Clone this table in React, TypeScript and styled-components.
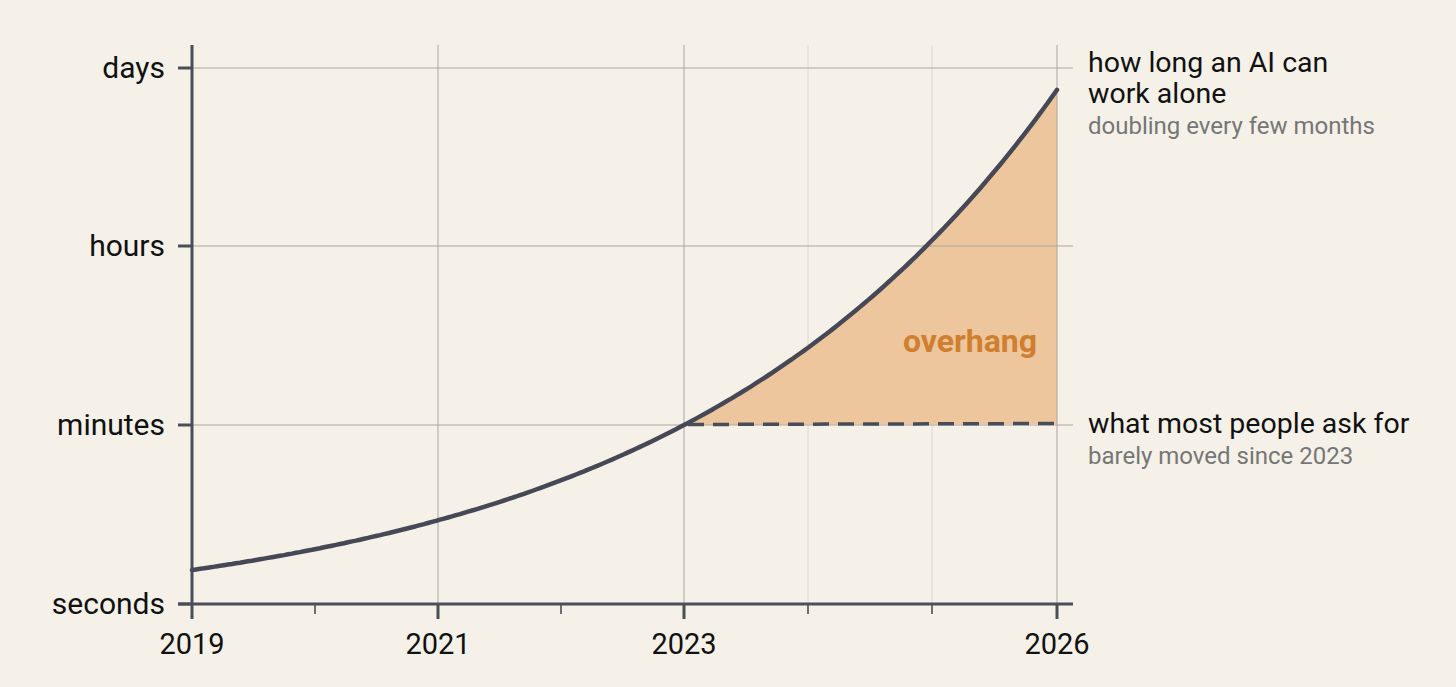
import styled, { createGlobalStyle } from "styled-components";

const GlobalStyle = createGlobalStyle`
  html, body {
    margin: 0;
    padding: 0;
    background: #f5f1e8;
  }
  body {
    overflow: hidden;
    font-family: Roboto, "Liberation Sans", Arial, sans-serif;
  }
`;

// chart frame, in page pixels
const LEFT = 192;
const BOTTOM = 604;
const TOP = 45;
const RIGHT = 1073;

const levels = [
  { label: "days", y: 68 },
  { label: "hours", y: 246 },
  { label: "minutes", y: 425 },
  { label: "seconds", y: 604 },
];

const years = [
  { label: "2019", x: 192 },
  { label: "2021", x: 438 },
  { label: "2023", x: 684 },
  { label: "2026", x: 1057 },
];

const minorTicks = [315, 561, 808, 932];
const minorGrid = [808, 932];

// curve: grows faster than the log scale, fitted by eye
const K = Math.log(1.917) / 246;
const curveY = (x: number) => BOTTOM - (54.2 * Math.exp(K * (x - LEFT)) - 20.2);

function pointsBetween(from: number, to: number, step = 4): [number, number][] {
  const pts: [number, number][] = [];
  for (let x = from; x < to; x += step) pts.push([x, curveY(x)]);
  pts.push([to, curveY(to)]);
  return pts;
}

const toPath = (pts: [number, number][]) =>
  pts.map(([x, y], i) => `${i === 0 ? "M" : "L"}${x.toFixed(1)} ${y.toFixed(1)}`).join(" ");

export default function App(): JSX.Element {
  const curve = toPath(pointsBetween(LEFT, 1057));
  const gap = pointsBetween(684, 1057);
  const fill = `${toPath(gap)} L1057 424 L684 425 Z`;

  return (
    <Page>
      <GlobalStyle />
      <Chart viewBox="0 0 1456 687" width={1456} height={687}>
        {minorGrid.map((x) => (
          <GridLine key={x} $minor x1={x} x2={x} y1={TOP} y2={BOTTOM} />
        ))}
        <Overhang d={fill} />
        {years.slice(1).map((y) => (
          <GridLine key={y.label} x1={y.x} x2={y.x} y1={TOP} y2={BOTTOM} />
        ))}
        {levels.slice(0, 3).map((l) => (
          <GridLine key={l.label} x1={LEFT} x2={RIGHT} y1={l.y} y2={l.y} />
        ))}

        <Curve d={curve} />
        <Ask x1={688} y1={424.5} x2={1057} y2={423.5} />
        <OverhangLabel x={970} y={352}>
          overhang
        </OverhangLabel>

        <Axis x1={LEFT} x2={LEFT} y1={TOP} y2={BOTTOM} />
        <Axis x1={178} x2={RIGHT} y1={BOTTOM} y2={BOTTOM} />
        {levels.map((l) => (
          <Axis key={l.label} x1={178} x2={LEFT} y1={l.y} y2={l.y} />
        ))}
        {years.map((y) => (
          <Axis key={y.label} x1={y.x} x2={y.x} y1={BOTTOM} y2={619} />
        ))}
        {minorTicks.map((x) => (
          <MinorTick key={x} x1={x} x2={x} y1={BOTTOM} y2={614} />
        ))}

        {levels.map((l) => (
          <LevelLabel key={l.label} x={165} y={l.y + 10}>
            {l.label}
          </LevelLabel>
        ))}
        {years.map((y) => (
          <YearLabel key={y.label} x={y.x} y={654}>
            {y.label}
          </YearLabel>
        ))}

        <NoteTitle x={1088} y={72}>how long an AI can</NoteTitle>
        <NoteTitle x={1088} y={103}>work alone</NoteTitle>
        <NoteSub x={1088} y={134}>doubling every few months</NoteSub>

        <NoteTitle x={1088} y={433}>what most people ask for</NoteTitle>
        <NoteSub x={1088} y={464}>barely moved since 2023</NoteSub>
      </Chart>
    </Page>
  );
}

const Page = styled.div`
  display: flex;
  width: 1456px;
  height: 687px;
  background: #f5f1e8;
`;

const Chart = styled.svg`
  display: block;
  flex: none;
`;

const GridLine = styled.line<{ $minor?: boolean }>`
  stroke: ${(p) => (p.$minor ? "#dedad0" : "#a9a7a1")};
  stroke-width: 1;
`;

const Axis = styled.line`
  stroke: #4b4e57;
  stroke-width: 3;
`;

const MinorTick = styled.line`
  stroke: #4b4e57;
  stroke-width: 1.6;
`;

const Curve = styled.path`
  fill: none;
  stroke: #464955;
  stroke-width: 4.5;
  stroke-linecap: round;
  stroke-linejoin: round;
`;

const Overhang = styled.path`
  fill: #edc69d;
  stroke: none;
`;

const Ask = styled.line`
  stroke: #4a4d57;
  stroke-width: 3.5;
  stroke-dasharray: 16 9;
`;

const OverhangLabel = styled.text`
  font-family: Roboto, "Liberation Sans", sans-serif;
  font-size: 32px;
  font-weight: 700;
  fill: #cf7f2f;
  text-anchor: middle;
`;

const LevelLabel = styled.text`
  font-family: Roboto, "Liberation Sans", sans-serif;
  font-size: 30px;
  fill: #111111;
  text-anchor: end;
`;

const YearLabel = styled.text`
  font-family: Roboto, "Liberation Sans", sans-serif;
  font-size: 29px;
  fill: #111111;
  text-anchor: middle;
`;

const NoteTitle = styled.text`
  font-family: Roboto, "Liberation Sans", sans-serif;
  font-size: 28.5px;
  fill: #111111;
`;

const NoteSub = styled.text`
  font-family: Roboto, "Liberation Sans", sans-serif;
  font-size: 24px;
  fill: #767676;
`;
